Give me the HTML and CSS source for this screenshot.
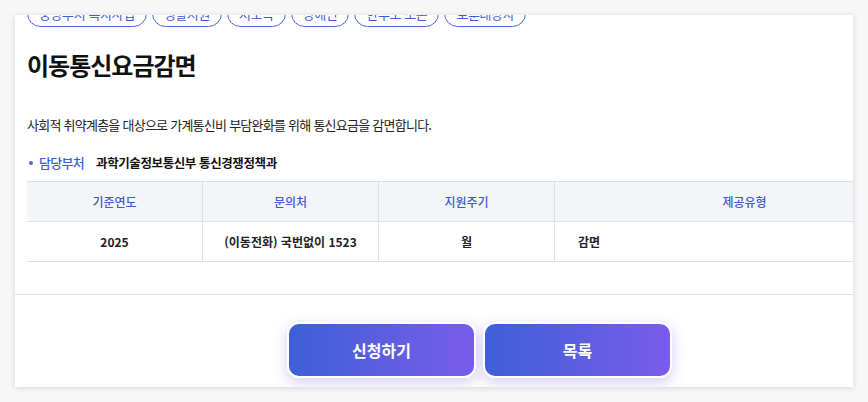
FILE: index.html
```
<!DOCTYPE html>
<html lang="ko">
<head>
  <meta charset="UTF-8">
  <title>이동통신요금감면</title>
  <link rel="stylesheet" href="styles.css">
</head>
<body>

<div class="card">
  <div class="chips">
    <span class="chip">중앙부처 복지사업</span>
    <span class="chip">생활지원</span>
    <span class="chip">저소득</span>
    <span class="chip">장애인</span>
    <span class="chip">한부모·조손</span>
    <span class="chip">보훈대상자</span>
  </div>

  <h1 class="title">이동통신요금감면</h1>

  <p class="desc">사회적 취약계층을 대상으로 가계통신비 부담완화를 위해 통신요금을 감면합니다.</p>

  <div class="dept">
    <span class="dot"></span>
    <span class="dept-label">담당부처</span>
    <span class="dept-value">과학기술정보통신부 통신경쟁정책과</span>
  </div>

  <table class="info">
    <thead>
      <tr>
        <th class="c1">기준연도</th>
        <th class="c2">문의처</th>
        <th class="c3">지원주기</th>
        <th class="c4">제공유형</th>
      </tr>
    </thead>
    <tbody>
      <tr>
        <td>2025</td>
        <td>(이동전화) 국번없이 1523</td>
        <td>월</td>
        <td class="left">감면</td>
      </tr>
    </tbody>
  </table>

  <div class="actions">
    <button class="btn">신청하기</button>
    <button class="btn">목록</button>
  </div>
</div>

</body>
</html>
```

FILE: styles.css
```
body {
  margin: 0;
  padding: 15px;
  background: #f7f7f8;
  font-family: "Noto Sans CJK KR", "Noto Sans", sans-serif;
  color: #111;
}
.card {
  width: 838px;
  height: 372px;
  background: #fff;
  box-shadow: 0 1px 6px rgba(0,0,0,0.14);
  overflow: hidden;
  box-sizing: border-box;
  padding-left: 12px;
}
.chips {
  display: flex;
  gap: 5px;
  margin-top: -15px;
}
.chip {
  display: inline-block;
  height: 27px;
  line-height: 25px;
  box-sizing: border-box;
  padding: 0 11px;
  border: 1px solid #4a66d8;
  border-radius: 14px;
  color: #3d5bd6;
  font-size: 13px;
  letter-spacing: -0.4px;
}
.title {
  margin: 22px 0 0;
  font-size: 24px;
  font-weight: 700;
  line-height: 32px;
  letter-spacing: -1px;
  color: #111;
}
.desc {
  margin: 34px 0 0;
  font-size: 13px;
  line-height: 20px;
  letter-spacing: -0.75px;
  color: #222;
}
.dept {
  display: flex;
  align-items: center;
  margin-top: 18px;
  font-size: 13px;
  line-height: 20px;
}
.dot {
  width: 4px;
  height: 4px;
  border-radius: 50%;
  background: #4a66d8;
  margin: 0 6px 0 2px;
}
.dept-label {
  color: #3d5bd6;
  font-weight: 500;
  letter-spacing: -0.7px;
  margin-right: 12px;
}
.dept-value {
  font-weight: 700;
  font-size: 12.5px;
  letter-spacing: -0.4px;
  color: #111;
}
.info {
  margin-top: 8px;
  width: 908px;
  border-collapse: collapse;
  table-layout: fixed;
  font-size: 12px;
}
.info th, .info td {
  border: 1px solid #dedfe3;
  text-align: center;
  height: 39px;
  padding: 0;
}
.info tr > :first-child {
  border-left: none;
}
.info th {
  background: #f4f5f9;
  color: #3f58d4;
  font-weight: 500;
}
.info td {
  font-weight: 700;
  color: #222;
}
.info td.left {
  text-align: left;
  padding-left: 23px;
}
.c1 { width: 175px; }
.c2 { width: 175px; }
.c3 { width: 175px; }
.actions {
  margin: 32px 0 0 -12px;
  border-top: 1px solid #e2e2e5;
  padding: 27px 0 0 272px;
  display: flex;
  gap: 7px;
}
.btn {
  width: 189px;
  height: 56px;
  border: 2px solid #fff;
  border-radius: 12px;
  background: linear-gradient(90deg, #3d60d7, #7a5ce9);
  color: #fff;
  font-family: "Noto Sans CJK KR", sans-serif;
  font-size: 16px;
  font-weight: 700;
  box-shadow: 0 4px 14px rgba(100,90,220,0.3);
}
```
